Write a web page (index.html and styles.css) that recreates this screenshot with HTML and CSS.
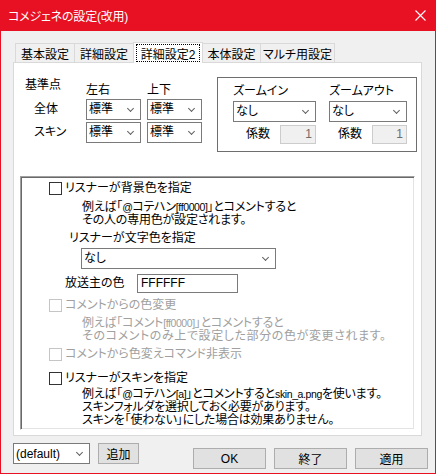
FILE: index.html
```html
<!DOCTYPE html>
<html lang="ja">
<head>
    <meta charset="UTF-8">
    <title>コメジェネの設定(改用)</title>
    <link rel="stylesheet" href="styles.css">
</head>
<body>

<div class="window">
    <div class="titlebar">
        <span class="title">コメジェネの設定(改用)</span>
        <svg class="close" width="11" height="11" viewBox="0 0 11 11">
            <path d="M0.5 0.5 L10.5 10.5 M10.5 0.5 L0.5 10.5" stroke="#fff" stroke-width="1.1" fill="none"/>
        </svg>
    </div>

    <div class="client">
        <div class="tabs">
            <div class="tab t1">基本設定</div>
            <div class="tab t2">詳細設定</div>
            <div class="tab t3 active"><span class="focus">詳細設定2</span></div>
            <div class="tab t4">本体設定</div>
            <div class="tab t5">マルチ用設定</div>
        </div>

        <div class="panel">
            <div class="top">
                <!-- 基準点 -->
                <div class="origin">
                    <div class="origin-title">基準点</div>
                    <div class="col-head">左右</div>
                    <div class="col-head">上下</div>

                    <div class="row-label">全体</div>
                    <div class="combo"><span>標準</span><i class="arrow"></i></div>
                    <div class="combo"><span>標準</span><i class="arrow"></i></div>

                    <div class="row-label">スキン</div>
                    <div class="combo"><span>標準</span><i class="arrow"></i></div>
                    <div class="combo"><span>標準</span><i class="arrow"></i></div>
                </div>

                <!-- ズーム -->
                <div class="zoom-box">
                    <div class="zoom-col zin">
                        <div class="zoom-title">ズームイン</div>
                        <div class="combo"><span>なし</span><i class="arrow"></i></div>
                        <div class="factor">
                            <span>係数</span>
                            <div class="num w36">1</div>
                        </div>
                    </div>
                    <div class="zoom-col zout">
                        <div class="zoom-title">ズームアウト</div>
                        <div class="combo"><span>なし</span><i class="arrow"></i></div>
                        <div class="factor">
                            <span>係数</span>
                            <div class="num w35">1</div>
                        </div>
                    </div>
                </div>
            </div>

            <div class="scroll">
                <div class="check first"><span class="box"></span>リスナーが背景色を指定</div>
                <div class="desc d1">
                    <div>例えば「<span class="en">@</span>コテハン<span class="en">[ff0000]</span>」とコメントすると</div>
                    <div>その人の専用色が設定されます。</div>
                </div>
                <div class="sub-label">リスナーが文字色を指定</div>
                <div class="combo wide"><span>なし</span><i class="arrow"></i></div>
                <div class="owner">
                    <span class="owner-label">放送主の色</span>
                    <div class="text-input">FFFFFF</div>
                </div>

                <div class="check disabled c2"><span class="box"></span>コメントからの色変更</div>
                <div class="desc disabled d2">
                    <div>例えば「コメント<span class="en">[ff0000]</span>」とコメントすると</div>
                    <div class="loose">そのコメントのみ上で設定した部分の色が変更されます。</div>
                </div>
                <div class="check disabled c3"><span class="box"></span>コメントから色変えコマンド非表示</div>

                <div class="check c4"><span class="box"></span>リスナーがスキンを指定</div>
                <div class="desc d3">
                    <div>例えば「<span class="en">@</span>コテハン<span class="en">[a]</span>」とコメントすると<span class="en">skin_a.png</span>を使います。</div>
                    <div>スキンフォルダを選択しておく必要があります。</div>
                    <div>スキンを「使わない」にした場合は効果ありません。</div>
                </div>
            </div>
        </div>

        <div class="footer">
            <div class="combo preset"><span>(default)</span><i class="arrow"></i></div>
            <div class="btn add">追加</div>
            <div class="btn ok">OK</div>
            <div class="btn">終了</div>
            <div class="btn">適用</div>
        </div>
    </div>
</div>

</body>
</html>
```

FILE: styles.css
```css
body {
    margin: 0;
    font-family: "Liberation Sans Narrow", "Liberation Sans", "Noto Sans CJK JP", sans-serif;
    font-size: 12px;
    font-feature-settings: "palt";
    color: #000;
    background: #fff;
}

.window {
    width: 436px;
    height: 474px;
    box-sizing: border-box;
    background: #f0f0f0;
    border: 1px solid #e81123;
    border-top: 0;
}

.titlebar {
    height: 31px;
    margin: 0 -1px;
    background: #e81123;
    color: #fff;
    display: flex;
    align-items: center;
    justify-content: space-between;
    padding: 0 10px 0 8px;
}

.title {
    font-size: 12px;
    letter-spacing: -0.2px;
}

.close {
    display: block;
}

.client {
    padding: 12px 0 0 12px;
}

/* タブ */
.tabs {
    display: flex;
    align-items: flex-end;
    height: 19px;
    margin-left: 2px;
    position: relative;
    z-index: 2;
}

.tab {
    height: 19px;
    box-sizing: border-box;
    border: 1px solid #d9d9d9;
    border-bottom: 0;
    background: #f0f0f0;
    margin-left: -1px;
    display: flex;
    align-items: center;
    justify-content: center;
    padding-top: 1px;
}

.t1 { width: 60px; margin-left: 0; }
.t2 { width: 60px; }
.t3 { width: 70px; }
.t4 { width: 59px; }
.t5 { width: 75px; }

.tab.active {
    height: 21px;
    margin-bottom: -1px;
    background: #fff;
    padding: 1px 2px 1px 2px;
}

.focus {
    flex: 1;
    align-self: stretch;
    border: 1px dotted #000;
    display: flex;
    align-items: center;
    justify-content: center;
}

.panel {
    width: 409px;
    height: 374px;
    box-sizing: border-box;
    border: 1px solid #d9d9d9;
    background: #fff;
}

.top {
    display: flex;
    height: 113px;
    box-sizing: border-box;
    padding: 14px 0 0 11px;
}

/* 基準点 */
.origin {
    display: grid;
    grid-template-columns: 55px 55px 55px;
    grid-template-rows: 20px 21px 21px;
    column-gap: 6px;
    row-gap: 2px;
    line-height: 13px;
}

.origin-title {
    align-self: start;
    margin-top: 2px;
}

.col-head {
    align-self: end;
}

.row-label {
    align-self: center;
    padding-left: 9px;
}

.combo {
    height: 21px;
    box-sizing: border-box;
    border: 1px solid #7a7a7a;
    background: #fff;
    display: flex;
    align-items: center;
    justify-content: space-between;
    padding: 0 7px 0 2px;
    white-space: nowrap;
}

.arrow {
    width: 5px;
    height: 5px;
    flex: none;
    box-sizing: border-box;
    border-right: 1px solid #606060;
    border-bottom: 1px solid #606060;
    transform: rotate(45deg);
    margin-top: -3px;
}

/* ズーム */
.zoom-box {
    width: 200px;
    height: 75px;
    box-sizing: border-box;
    border: 1px solid #6e6e6e;
    margin-left: 15px;
    display: flex;
    gap: 13px;
    padding: 7px 0 0 15px;
    line-height: 13px;
}

.zin { width: 83px; }
.zout { width: 78px; }

.zoom-title {
    height: 13px;
    white-space: nowrap;
}

.zoom-col .combo {
    margin-top: 3px;
}

.factor {
    display: flex;
    justify-content: flex-end;
    align-items: center;
    gap: 10px;
    margin-top: 3px;
}

.num {
    height: 19px;
    box-sizing: border-box;
    border: 1px solid #cccccc;
    background: #f0f0f0;
    color: #6d6d6d;
    text-align: right;
    padding-right: 3px;
    line-height: 17px;
}

.w36 { width: 36px; }
.w35 { width: 35px; }

/* スクロール領域 */
.scroll {
    width: 395px;
    height: 254px;
    box-sizing: border-box;
    margin-left: 6px;
    border: 1px solid;
    border-color: #a0a0a0 #ffffff #ffffff #a0a0a0;
    box-shadow: inset 1px 1px #696969, inset -1px -1px #e3e3e3;
    padding: 5px 0 0 1px;
    line-height: 13px;
    white-space: nowrap;
    overflow: hidden;
}

.check {
    display: flex;
    align-items: center;
    height: 13px;
    margin-left: 27px;
    gap: 3px;
}

.box {
    width: 13px;
    height: 13px;
    box-sizing: border-box;
    border: 1px solid #333333;
    background: #fff;
    flex: none;
}

.disabled {
    color: #a0a0a0;
}

.disabled .box {
    border-color: #c5c5c5;
}

.desc {
    margin-left: 60px;
    letter-spacing: -0.2px;
}

.desc .en {
    font-size: 10.5px;
    letter-spacing: -0.4px;
}

.desc .loose {
    letter-spacing: 0.6px;
}

.d1 { margin-top: 6px; }
.d2 { margin-top: 5px; }
.d3 { margin-top: 3px; }

.c2 { margin-top: 6px; }
.c3 { margin-top: 5px; }
.c4 { margin-top: 11px; }

.sub-label {
    margin: 5px 0 0 47px;
}

.combo.wide {
    width: 195px;
    margin: 3px 0 0 59px;
}

.owner {
    display: flex;
    align-items: center;
    margin: 5px 0 0 43px;
}

.owner-label {
    width: 72px;
}

.text-input {
    width: 101px;
    height: 19px;
    box-sizing: border-box;
    border: 1px solid #7a7a7a;
    padding-left: 3px;
    line-height: 17px;
}

/* 下部ボタン */
.footer {
    display: flex;
    align-items: flex-start;
    margin-top: 7px;
    gap: 8px;
}

.combo.preset {
    width: 77px;
    padding-left: 2px;
}

.btn {
    width: 73px;
    height: 21px;
    box-sizing: border-box;
    border: 1px solid #adadad;
    background: #e1e1e1;
    display: flex;
    align-items: center;
    justify-content: center;
    margin-top: 5px;
}

.btn.add {
    width: 41px;
    margin-top: 0;
}

.btn.ok {
    margin-left: 46px;
}
```
